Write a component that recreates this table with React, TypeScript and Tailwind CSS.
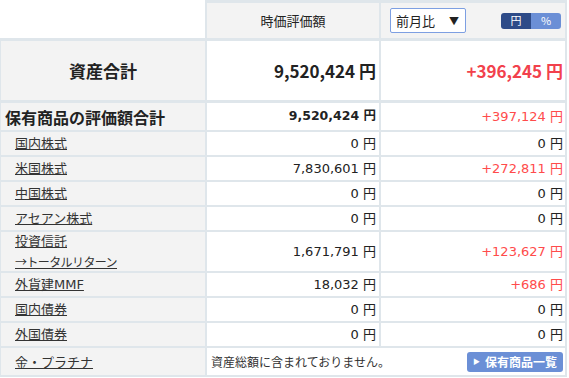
const font = { fontFamily: '"DejaVu Sans", "Noto Sans CJK JP", sans-serif' };
const cjk = { fontFamily: '"Noto Sans CJK JP", "Noto Sans", sans-serif' };

type Row = { label: string; sub?: string; value: string; diff: string; up?: boolean };

const rows: Row[] = [
  { label: "国内株式", value: "0 円", diff: "0 円" },
  { label: "米国株式", value: "7,830,601 円", diff: "+272,811 円", up: true },
  { label: "中国株式", value: "0 円", diff: "0 円" },
  { label: "アセアン株式", value: "0 円", diff: "0 円" },
  { label: "投資信託", sub: "→トータルリターン", value: "1,671,791 円", diff: "+123,627 円", up: true },
  { label: "外貨建MMF", value: "18,032 円", diff: "+686 円", up: true },
  { label: "国内債券", value: "0 円", diff: "0 円" },
  { label: "外国債券", value: "0 円", diff: "0 円" },
];

const App = () => {
  return (
    <div className="w-[569px] h-[378px] bg-white text-[#222]" style={font}>
      <div className="w-[567px]">
        {/* header */}
        <div className="flex h-[41px]">
          <div className="w-[205px] border-b-[3px] border-[#dfe6eb] bg-white" />
          <div
            className="flex w-[176px] items-center justify-center border-x-2 border-t-[3px] border-b-[3px] border-[#dfe6eb] bg-[#f3f3f3] text-[13px]"
            style={cjk}
          >
            時価評価額
          </div>
          <div className="flex w-[186px] items-center justify-between border-r-2 border-t-[3px] border-b-[3px] border-[#dfe6eb] bg-[#f3f3f3] pl-[9px] pr-[4px]">
            <div
              className="flex h-[25px] w-[76px] items-center justify-between rounded-[2px] border border-[#7d9fe2] bg-white pl-[5px] pr-[6px] text-[13px]"
              style={cjk}
            >
              <span>前月比</span>
              <span className="text-[10px]">▼</span>
            </div>
            <div className="flex h-[16px] w-[60px] overflow-hidden rounded-[3px] text-[11px] text-white" style={cjk}>
              <div className="flex w-[30px] items-center justify-center bg-[#2e4b88]">円</div>
              <div className="flex w-[30px] items-center justify-center bg-[#6b8fd6]">%</div>
            </div>
          </div>
        </div>

        {/* total */}
        <div className="flex h-[62px] border-b-[3px] border-[#dfe6eb]" style={cjk}>
          <div className="flex w-[207px] items-center justify-center border-l border-r-2 border-[#dfe6eb] bg-[#f3f3f3] text-[17px] font-bold">
            資産合計
          </div>
          <div className="flex w-[174px] items-center justify-end border-r-2 border-[#dfe6eb] pr-[3px] text-[17px] font-bold">
            9,520,424 円
          </div>
          <div className="flex w-[186px] items-center justify-end border-r-2 border-[#dfe6eb] pr-[2px] text-[17px] font-bold text-[#f2414c]">
            +396,245 円
          </div>
        </div>

        {/* holdings total */}
        <div className="flex h-[29px] border-b-2 border-[#dfe6eb]">
          <div
            className="flex w-[207px] items-center border-l border-r-2 border-[#dfe6eb] bg-[#f3f3f3] pl-[4px] text-[16px] font-bold"
            style={cjk}
          >
            保有商品の評価額合計
          </div>
          <div className="flex w-[174px] items-center justify-end border-r-2 border-[#dfe6eb] pr-[3px] text-[12.5px] font-bold">
            9,520,424 円
          </div>
          <div className="flex w-[186px] items-center justify-end border-r-2 border-[#dfe6eb] pr-[2px] text-[13px] text-[#ff4b4b]">
            +397,124 円
          </div>
        </div>

        {rows.map((r) => (
          <div key={r.label} className={`flex border-b-2 border-[#dfe6eb] ${r.sub ? "h-[41px]" : "h-[25px]"}`}>
            <div className="flex w-[207px] flex-col justify-center border-l border-r-2 border-[#dfe6eb] bg-[#f3f3f3] pl-[14px] text-[13px] leading-[20px] text-[#333]">
              <span className="underline">{r.label}</span>
              {r.sub && (
                <span className="text-[12px] tracking-[-0.6px] underline" style={cjk}>
                  {r.sub}
                </span>
              )}
            </div>
            <div className="flex w-[174px] items-center justify-end border-r-2 border-[#dfe6eb] pr-[3px] text-[13px]">
              {r.value}
            </div>
            <div
              className={`flex w-[186px] items-center justify-end border-r-2 border-[#dfe6eb] pr-[2px] text-[13px] ${
                r.up ? "text-[#ff4b4b]" : ""
              }`}
            >
              {r.diff}
            </div>
          </div>
        ))}

        {/* gold */}
        <div className="flex h-[29px] border-b-2 border-[#dfe6eb]" style={cjk}>
          <div className="flex w-[207px] items-center border-l border-r-2 border-[#dfe6eb] bg-[#f3f3f3] pl-[14px] text-[13px] text-[#333]">
            <span className="underline">金・プラチナ</span>
          </div>
          <div className="flex flex-1 items-center justify-between border-r-2 border-[#dfe6eb] pl-[4px] pr-[2px]">
            <span className="text-[12px] text-[#333]">資産総額に含まれておりません。</span>
            <div className="flex h-[20px] w-[96px] items-center justify-center gap-[5px] rounded-[3px] bg-[#6b8fd6] text-[12px] font-bold text-white">
              <span className="text-[7px]">▶</span>
              <span>保有商品一覧</span>
            </div>
          </div>
        </div>
      </div>
    </div>
  );
};

export default App;
